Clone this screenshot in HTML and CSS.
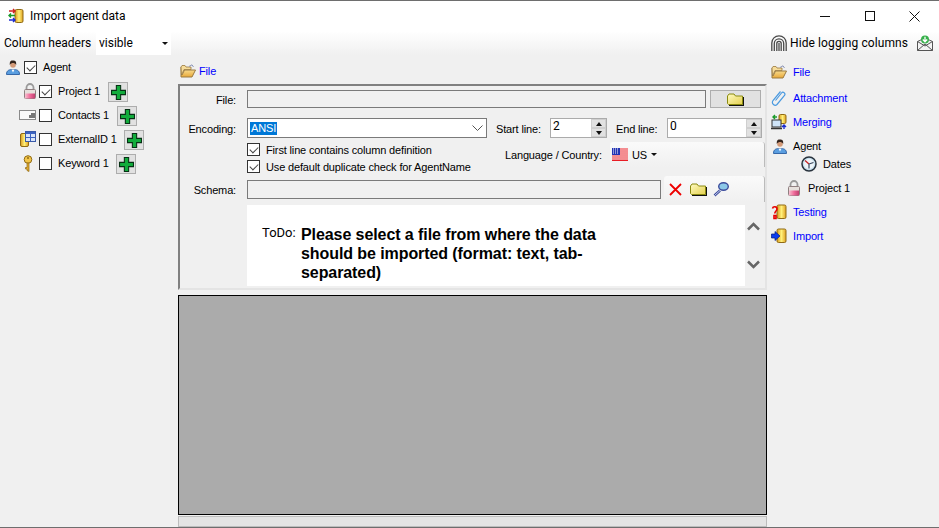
FILE: index.html
```html
<!DOCTYPE html>
<html lang="en">
<head>
<meta charset="utf-8">
<title>Import agent data</title>
<link rel="stylesheet" href="styles.css">
</head>
<body>
<svg class="defs" width="0" height="0" aria-hidden="true">
  <defs>
    <linearGradient id="gold" x1="0" x2="1"><stop offset="0" stop-color="#d99a1c"/><stop offset=".5" stop-color="#fff07a"/><stop offset="1" stop-color="#e0a020"/></linearGradient>
    <linearGradient id="folderg" x1="0" y1="0" x2="1" y2="1"><stop offset="0" stop-color="#fffbc0"/><stop offset="1" stop-color="#e4d050"/></linearGradient>
    <linearGradient id="openf" x1="0" y1="0" x2="0" y2="1"><stop offset="0" stop-color="#fff0b0"/><stop offset="1" stop-color="#e8a838"/></linearGradient>
    <linearGradient id="lock" x1="0" y1="0" x2="1" y2="0"><stop offset="0" stop-color="#f8c0d0"/><stop offset=".5" stop-color="#f06a9a"/><stop offset="1" stop-color="#c04070"/></linearGradient>
    <symbol id="i-open" viewBox="0 0 16 14"><path d="M1 3V13H12L15.500 6H4.500L2 11" fill="url(#openf)" stroke="#9a7a40"/><path d="M1 3 2 1.500H5L6 3H11V5.500H4L1.500 11Z" fill="#f6dc9a" stroke="#9a7a40" stroke-width=".8"/><path d="M9 2.500 12 .8 13.500 3" fill="none" stroke="#8d96b8"/></symbol>
    <symbol id="i-agent" viewBox="0 0 14 15"><path d="M.5 14.500C.5 10 3.500 9.500 7 9.500s6.500.5 6.500 5Z" fill="#5a9ee0" stroke="#3668a8"/><path d="M5.500 9.500 7 12.500 8.500 9.500Z" fill="#fff"/><circle cx="7" cy="5" r="2.800" fill="#d49a78"/><path d="M3.800 5C3.500 1 5 .5 7 .5S10.500 1 10.200 5C9.500 3.500 8 3 7 3S4.500 3.500 3.800 5Z" fill="#33241c"/></symbol>
    <symbol id="i-lock" viewBox="0 0 12 16"><path d="M2.500 7V4.500a3.500 3.500 0 0 1 7 0V7" fill="none" stroke="#9a9a9a" stroke-width="1.800"/><rect x=".5" y="6.500" width="11" height="9" rx="1" fill="#e6e0dc" stroke="#8f7f80"/><rect x="1" y="10.500" width="10" height="5" fill="url(#lock)"/></symbol>
    <symbol id="i-contact" viewBox="0 0 17 10"><rect x=".5" y=".5" width="16" height="9" fill="#fafafa" stroke="#8a8a8a"/><path d="M10 8V5h2V3h4v5Z" fill="#777"/></symbol>
    <symbol id="i-ext" viewBox="0 0 16 16"><rect x=".5" y="2.500" width="8" height="13" rx="1.500" fill="url(#gold)" stroke="#8f6a14"/><rect x="5.500" y=".5" width="10" height="10" fill="#d8e4f8" stroke="#3a5aa8"/><path d="M6 1h9v2H6Z" fill="#3a62c0"/><path d="M10.500 3v7M6 6.500h9" stroke="#3a62c0"/></symbol>
    <symbol id="i-key" viewBox="0 0 10 17"><circle cx="5" cy="4.500" r="3.800" fill="#f3c64a" stroke="#8f6a14"/><circle cx="5" cy="3" r="1" fill="#8f6a14"/><path d="M4 8h2v8.500L4 15.500V14h-1.500v-1.500H4Z" fill="#e0aa30" stroke="#8f6a14" stroke-width=".7"/></symbol>
    <symbol id="i-plus" viewBox="0 0 14 14"><path d="M5 .5h4v4.500h4.500v4H9v4.500H5V9H.5V5H5Z" fill="#12ac3c" stroke="#063014"/></symbol>
    <symbol id="i-folder" viewBox="0 0 17 13"><path d="M2 12.500h14.500V4" fill="none" stroke="#111" stroke-width="1.500"/><path d="M.5 10.500V3L2 1h5l1.500 2h7v8.500H1.500Z" fill="url(#folderg)" stroke="#8a8a10"/></symbol>
    <symbol id="i-x" viewBox="0 0 13 13"><path d="M1 1 12 12M12 1 1 12" stroke="#ee0000" stroke-width="1.800"/></symbol>
    <symbol id="i-search" viewBox="0 0 16 15"><path d="M1.500 13.500 7 8.500" stroke="#3c4c9c" stroke-width="2.600"/><path d="M1.500 13.500 7 8.500" stroke="#e8ecff" stroke-width=".8"/><ellipse cx="10.500" cy="4.500" rx="4.800" ry="3.700" fill="#8cc8e8" stroke="#3c4c9c" stroke-width="1.400"/></symbol>
    <symbol id="i-clip" viewBox="0 0 16 16"><path d="M4.500 10.500 10.500 3c1.500-1.800 4.500.3 3 2.500L6 14.500C3.800 16.500 0 13.800 2 10.500L9.500 1.500" fill="none" stroke="#4a9ae0" stroke-width="1.200"/></symbol>
    <symbol id="i-merge" viewBox="0 0 16 16"><rect x="8" y=".5" width="7" height="9" rx="1.500" fill="url(#gold)" stroke="#8f6a14"/><rect x="1" y="6" width="9" height="7" fill="#cfe4f8" stroke="#333"/><path d="M0 14.500h11" stroke="#333" stroke-width="1.500"/><path d="M6 3H2M4 1 2 3l2 2" fill="none" stroke="#1a9a2a" stroke-width="1.400"/><path d="M13 15v-4M11 13l2-2 2 2" fill="none" stroke="#1c2cd0" stroke-width="1.400"/></symbol>
    <symbol id="i-clock" viewBox="0 0 16 16"><circle cx="8" cy="8" r="7" fill="#c8e0ee" stroke="#28323c" stroke-width="1.500"/><circle cx="8" cy="8" r="5" fill="#eef4f8"/><path d="M8 8 4 4.500" stroke="#c82020" stroke-width="1.200"/><path d="M8 8 12.500 6.500M8 8v4.500" stroke="#3a4a60" stroke-width="1.200"/></symbol>
    <symbol id="i-test" viewBox="0 0 16 15"><rect x="6" y=".5" width="9" height="13.500" rx="1.500" fill="url(#gold)" stroke="#8f6a14"/><path d="M1.500 4C2 1.500 6 1.500 6 4.500 6 6.500 3.800 6.500 3.800 9M3 11h2v3H3Z" fill="none" stroke="#e80000" stroke-width="1.600"/></symbol>
    <symbol id="i-import" viewBox="0 0 16 15"><rect x="6" y=".5" width="9" height="13.500" rx="1.500" fill="url(#gold)" stroke="#8f6a14"/><path d="M.5 5.500H4V3l5 4.500L4 12V9.500H.5Z" fill="#0c3cf0" stroke="#001a80" stroke-width=".7"/></symbol>
    <symbol id="i-app" viewBox="0 0 16 16"><rect x="7" y="1.500" width="8" height="13" rx="1.500" fill="url(#gold)" stroke="#8f6a14"/><path d="M1 3h6M5 1l2 2-2 2" fill="none" stroke="#d02020" stroke-width="1.400"/><path d="M7 7.500H1M3 5.500l-2 2 2 2" fill="none" stroke="#1a9a2a" stroke-width="1.400"/><path d="M1 12h6M5 10l2 2-2 2" fill="none" stroke="#1c2cd0" stroke-width="1.400"/></symbol>
    <symbol id="i-print" viewBox="0 0 16 17" fill="none" stroke="#4a4a4a" stroke-width="1.300"><path d="M.8 16V8a7.200 7.200 0 0 1 14.400 0v8"/><path d="M3.300 16V8.500a4.700 4.700 0 0 1 9.400 0V16"/><path d="M5.800 16V8.500a2.200 2.200 0 0 1 4.400 0V16"/><path d="M8 8v8"/></symbol>
    <symbol id="i-mail" viewBox="0 0 16 16"><path d="M.5 6.500 8 3l7.500 3.500V15.500H.5Z" fill="#f4f4f4" stroke="#555"/><path d="M.5 15.500 8 9l7.500 6.500M.5 6.500 8 11l7.500-4.500" fill="none" stroke="#555"/><circle cx="8" cy="4.500" r="4" fill="#36b04a"/><path d="M8 1.800v5M5.800 4.500 8 6.800l2.200-2.300" fill="none" stroke="#fff" stroke-width="1.300"/></symbol>
  </defs>
</svg>

<div class="window">
  <header class="titlebar">
    <svg class="ic app-ic"><use href="#i-app"/></svg>
    <span class="title">Import agent data</span>
    <div class="win-controls">
      <span class="wc-btn"><svg width="10" height="10"><path d="M0 5.500h10" stroke="#111"/></svg></span>
      <span class="wc-btn"><svg width="10" height="10"><rect x=".5" y=".5" width="9" height="9" fill="none" stroke="#111"/></svg></span>
      <span class="wc-btn"><svg width="11" height="11"><path d="M.5.500l10 10M10.500.500l-10 10" stroke="#111"/></svg></span>
    </div>
  </header>

  <div class="toolbar">
    <span class="col-label">Column headers</span>
    <div class="drop">visible<span class="caret"></span></div>
    <div class="tool-spacer"></div>
    <svg class="ic print-ic"><use href="#i-print"/></svg>
    <span class="hide-label">Hide logging columns</span>
    <svg class="ic mail-ic"><use href="#i-mail"/></svg>
  </div>

  <div class="content">
    <aside class="tree">
      <div class="t-row t-root"><svg class="ic agent-ic"><use href="#i-agent"/></svg><span class="cb on"></span><span class="t-text">Agent</span></div>
      <div class="t-row"><span class="t-icon"><svg class="ic lock-ic"><use href="#i-lock"/></svg></span><span class="cb on"></span><span class="t-text w-project">Project 1</span><button class="plus"><svg class="ic plus-ic"><use href="#i-plus"/></svg></button></div>
      <div class="t-row"><span class="t-icon"><svg class="ic contact-ic"><use href="#i-contact"/></svg></span><span class="cb"></span><span class="t-text w-contacts">Contacts 1</span><button class="plus"><svg class="ic plus-ic"><use href="#i-plus"/></svg></button></div>
      <div class="t-row"><span class="t-icon"><svg class="ic ext-ic"><use href="#i-ext"/></svg></span><span class="cb"></span><span class="t-text w-ext">ExternalID 1</span><button class="plus"><svg class="ic plus-ic"><use href="#i-plus"/></svg></button></div>
      <div class="t-row"><span class="t-icon"><svg class="ic key-ic"><use href="#i-key"/></svg></span><span class="cb"></span><span class="t-text w-key">Keyword 1</span><button class="plus"><svg class="ic plus-ic"><use href="#i-plus"/></svg></button></div>
    </aside>

    <main class="center">
      <div class="file-head"><svg class="ic open-ic"><use href="#i-open"/></svg><span class="link">File</span></div>
      <section class="panel">
        <div class="row row-file">
          <label class="f-label">File:</label>
          <div class="in in-file"></div>
          <button class="browse"><svg class="ic folder-ic"><use href="#i-folder"/></svg></button>
        </div>
        <div class="row row-enc">
          <label class="f-label">Encoding:</label>
          <div class="combo"><span class="sel">ANSI</span><svg class="chev" width="11" height="6"><path d="M.5.500 5.500 5.500 10.500.500" fill="none" stroke="#555"/></svg></div>
          <span class="l-start">Start line:</span>
          <div class="spin spin-start"><span class="spin-val">2</span><span class="spin-btns"><i class="up"></i><i class="down"></i></span></div>
          <span class="l-end">End line:</span>
          <div class="spin spin-end"><span class="spin-val">0</span><span class="spin-btns"><i class="up"></i><i class="down"></i></span></div>
        </div>
        <div class="row row-opts">
          <div class="opts">
            <div class="opt"><span class="cb on"></span><span>First line contains column definition</span></div>
            <div class="opt"><span class="cb on"></span><span>Use default duplicate check for AgentName</span></div>
          </div>
          <span class="l-lang">Language / Country:</span>
          <div class="strip strip-lang">
            <svg class="flag" width="16" height="13" viewBox="0 0 16 13"><rect width="16" height="13" fill="#fff"/><path d="M0 1h16M0 3h16M0 5h16M0 7h16M0 9h16M0 11h16M0 12.500h16" stroke="#e81c24"/><rect width="8" height="7" fill="#2434b4"/><path d="M1 1h1M3 1h1M5 1h1M1 3h1M3 3h1M5 3h1M1 5h1M3 5h1M5 5h1" stroke="#fff"/></svg>
            <span class="us">US</span><span class="caret"></span>
          </div>
        </div>
        <div class="row row-schema">
          <label class="f-label">Schema:</label>
          <div class="in in-schema"></div>
          <div class="strip strip-schema">
            <svg class="ic x-ic"><use href="#i-x"/></svg>
            <svg class="ic folder-ic"><use href="#i-folder"/></svg>
            <svg class="ic search-ic"><use href="#i-search"/></svg>
          </div>
        </div>
        <div class="row row-todo">
          <div class="todo">
            <span class="todo-label">ToDo:</span>
            <p class="todo-text">Please select a file from where the data should be imported (format: text, tab-separated)</p>
          </div>
          <div class="scroller">
            <svg width="13" height="9"><path d="M1 7.500 6.500 2 12 7.500" fill="none" stroke="#666" stroke-width="2.500"/></svg>
            <svg width="13" height="9"><path d="M1 1.500 6.500 7 12 1.500" fill="none" stroke="#666" stroke-width="2.500"/></svg>
          </div>
        </div>
      </section>
      <div class="gray-area"></div>
      <div class="h-bar"></div>
    </main>

    <nav class="nav">
      <div class="n-row"><svg class="ic nav-ic"><use href="#i-open"/></svg><span class="link">File</span></div>
      <div class="n-row n-attach"><svg class="ic nav-ic"><use href="#i-clip"/></svg><span class="link">Attachment</span></div>
      <div class="n-row"><svg class="ic nav-ic"><use href="#i-merge"/></svg><span class="link">Merging</span></div>
      <div class="n-row n-agent"><svg class="ic nav-agent"><use href="#i-agent"/></svg><span>Agent</span></div>
      <div class="n-row n-dates"><svg class="ic clock-ic"><use href="#i-clock"/></svg><span>Dates</span></div>
      <div class="n-row n-project"><svg class="ic lock-ic"><use href="#i-lock"/></svg><span>Project 1</span></div>
      <div class="n-row"><svg class="ic nav-ic"><use href="#i-test"/></svg><span class="link">Testing</span></div>
      <div class="n-row"><svg class="ic nav-ic"><use href="#i-import"/></svg><span class="link">Import</span></div>
    </nav>
  </div>
</div>
</body>
</html>
```
FILE: styles.css
```css
* { box-sizing: border-box; }
html, body { margin: 0; height: 100%; overflow: hidden; }
body { font: 12px/16px Roboto, "Liberation Sans", sans-serif; color: #000; background: #f0f0f0; white-space: nowrap; }
.defs { display: block; height: 0; }
.ic { display: block; flex: none; }
.window { width: 939px; height: 528px; display: flex; flex-direction: column; border-top: 1px solid #6e6e6e; border-bottom: 1px solid #6e6e6e; }

.titlebar { height: 30px; flex: none; background: #fff; display: flex; align-items: center; padding-left: 8px; }
.app-ic { width: 16px; height: 16px; }
.title { margin-left: 6px; }
.win-controls { margin-left: auto; display: flex; padding-right: 2px; }
.wc-btn { width: 45px; height: 30px; display: flex; align-items: center; justify-content: center; }

.toolbar { height: 24px; flex: none; display: flex; align-items: center; padding-left: 4px; background: linear-gradient(#fff, #f0f0f0); }
.col-label { width: 92px; }
.drop { width: 75px; height: 24px; background: #fff; display: flex; align-items: center; padding-left: 3px; }
.caret { display: inline-block; width: 0; height: 0; border: 3px solid transparent; border-top: 3px solid #111; border-bottom: 0; }
.drop .caret { margin-left: auto; margin-right: 3px; }
.tool-spacer { flex: 1; }
.print-ic { width: 16px; height: 17px; }
.hide-label { margin-left: 3px; width: 127px; letter-spacing: 0.1px; }
.mail-ic { width: 16px; height: 16px; margin-right: 6px; }

.content { flex: 1; min-height: 0; display: flex; }
.tree, .center, .nav { font: 11px/16px "Liberation Sans", Arial, sans-serif; letter-spacing: -0.15px; }
.tree { width: 178px; flex: none; }
.t-row { height: 24px; display: flex; align-items: center; }
.t-root { padding-left: 6px; }
.agent-ic { width: 14px; height: 15px; margin-right: 4px; }
.t-icon { width: 39px; padding-right: 3px; display: flex; justify-content: flex-end; flex: none; }
.lock-ic { width: 12px; height: 16px; }
.contact-ic { width: 17px; height: 10px; }
.ext-ic { width: 16px; height: 16px; }
.key-ic { width: 10px; height: 17px; margin-right: 3px; }
.t-text { margin-left: 6px; flex: none; }
.w-project { width: 50px; }
.w-contacts { width: 59px; }
.w-ext { width: 66px; }
.w-key { width: 58px; }
.cb { width: 13px; height: 13px; flex: none; border: 1px solid #333; background: #fff; display: inline-block; position: relative; }
.cb.on::after { content: ""; position: absolute; left: 2px; top: 1px; width: 7px; height: 4px; border-left: 1px solid #444; border-bottom: 1px solid #444; transform: rotate(-45deg) translate(-1px, 1px); }
.plus { width: 20px; height: 20px; margin-top: 2px; padding: 1px; border: 1px solid #adadad; background: #e1e1e1; display: flex; align-items: center; justify-content: center; }
.plus-ic { width: 15px; height: 15px; }

.center { width: 590px; flex: none; display: flex; flex-direction: column; }
.file-head { height: 29px; display: flex; align-items: center; padding: 3px 0 0 2px; }
.open-ic { width: 16px; height: 14px; margin-right: 3px; }
.link { color: #0000ff; }

.panel { width: 589px; height: 206px; flex: none; border: 2px solid; border-color: #808080 #e4e4e4 #e4e4e4 #808080; padding-top: 4px; }
.row { display: flex; }
.f-label { width: 56px; text-align: right; flex: none; margin-right: 11px; padding-top: 2px; }
.row-file { height: 18px; align-items: center; }
.in { background: #f0f0f0; border: 1px solid #7a7a7a; }
.in-file { width: 459px; height: 18px; }
.browse { width: 51px; height: 18px; margin-left: 4px; padding: 0; background: #e1e1e1; border: 1px solid #adadad; display: flex; align-items: center; justify-content: center; }
.folder-ic { width: 17px; height: 13px; }
.row-enc { height: 20px; margin-top: 10px; align-items: center; }
.combo { width: 240px; height: 20px; background: #fff; border: 1px solid #7a7a7a; display: flex; align-items: center; padding-left: 2px; }
.sel { background: #0078d7; color: #fff; height: 13px; line-height: 13px; padding: 0 1px; }
.chev { margin-left: auto; margin-right: 3px; }
.l-start { margin-left: 9px; width: 54px; padding-top: 2px; }
.l-end { margin-left: 9px; width: 51px; padding-top: 2px; }
.spin { height: 20px; border: 1px solid #ababab; background: #fff; display: flex; justify-content: space-between; padding-left: 2px; }
.spin-val { font: 12px/14px Roboto, sans-serif; }
.spin-start { width: 57px; }
.spin-end { width: 95px; }
.spin-btns { width: 15px; display: flex; flex-direction: column; background: #f0f0f0; }
.spin-btns i { height: 9px; flex: none; background: #e1e1e1; display: flex; align-items: center; justify-content: center; border: 1px solid #cfcfcf; }
.spin-btns i::after { content: ""; border: 3px solid transparent; }
.spin-btns .up::after { border-bottom: 4px solid #111; border-top: 0; }
.spin-btns .down::after { border-top: 4px solid #111; border-bottom: 0; }

.row-opts { height: 34px; margin-top: 4px; }
.opts { margin-left: 67px; width: 258px; flex: none; display: flex; flex-direction: column; padding-top: 1px; gap: 4px; }
.opt { display: flex; align-items: center; height: 13px; gap: 6px; }
.l-lang { width: 105px; flex: none; padding-top: 5px; }
.strip { background: linear-gradient(#fafafa, #f0f0f0); border-radius: 3px 3px 0 0; display: flex; align-items: center; border-right: 1px solid #bbb; }
.strip-lang { width: 155px; height: 25px; padding-left: 2px; }
.flag { display: block; flex: none; }
.us { margin-left: 4px; }
.strip-lang .caret { margin-left: 4px; }
.row-schema { height: 26px; align-items: center; }
.in-schema { width: 414px; height: 19px; }
.strip-schema { width: 101px; height: 26px; margin-left: 3px; padding-left: 5px; }
.x-ic { width: 13px; height: 13px; margin-right: 8px; }
.search-ic { width: 16px; height: 15px; margin-left: 6px; }

.row-todo { margin-top: 3px; height: 81px; }
.todo { margin-left: 67px; width: 498px; height: 81px; background: #fff; display: flex; padding: 20px 0 0 15px; }
.todo-label { width: 39px; flex: none; font: 13px/16px Roboto, sans-serif; letter-spacing: 0; }
.todo-text { margin: 0; width: 310px; white-space: normal; font: bold 16px/19px "Liberation Sans", Arial, sans-serif; letter-spacing: -0.08px; color: #000; }
.scroller { width: 17px; display: flex; flex-direction: column; align-items: center; padding-top: 17px; gap: 29px; }

.gray-area { width: 589px; height: 220px; margin-top: 5px; flex: none; background: #ababab; border: 1px solid #000; }
.h-bar { width: 589px; flex: 1; margin-top: 1px; background: #e4e4e4; border: 1px solid #bcbcbc; }

.nav { flex: 1; padding: 9px 0 0 3px; display: flex; flex-direction: column; gap: 8px; }
.n-row { height: 16px; flex: none; display: flex; align-items: center; }
.nav-ic { width: 16px; height: 16px; margin-right: 6px; }
.n-attach { margin-top: 2px; }
.n-agent { padding-left: 2px; }
.nav-agent { width: 14px; height: 15px; margin-right: 6px; }
.n-dates { margin-top: -6px; padding-left: 30px; }
.clock-ic { width: 16px; height: 16px; margin-right: 6px; }
.n-project { padding-left: 17px; }
.n-project .lock-ic { margin-right: 8px; }
```
